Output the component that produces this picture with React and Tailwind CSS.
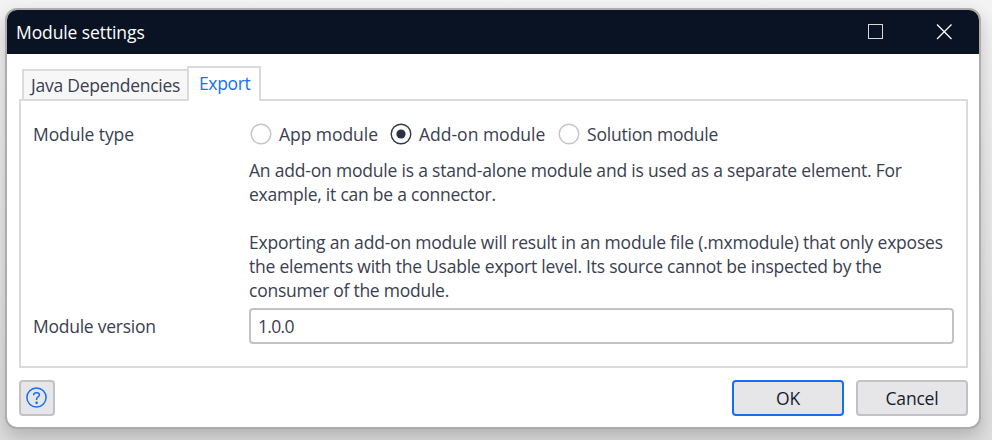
import React from 'react';

function Radio({ label, checked, className }) {
  return (
    <label className={`flex items-center whitespace-nowrap ${className}`}>
      <svg width="22" height="22" viewBox="0 0 22 22" fill="none" className="mr-[7px] shrink-0">
        <circle cx="11" cy="11" r="9.8" stroke={checked ? '#343a4c' : '#c5c4cb'} strokeWidth="1.4" />
        {checked && <circle cx="11" cy="11" r="4.6" fill="#2c3245" />}
      </svg>
      <span>{label}</span>
    </label>
  );
}

function Line({ children, className = '' }) {
  return <div className={`h-6 whitespace-nowrap ${className}`}>{children}</div>;
}

export default function App() {
  return (
    <div className="h-[440px] w-[992px] overflow-hidden bg-linear-to-b from-[#f3f3f3] to-[#dedede] pt-2 pl-[5px] font-['Open_Sans','Noto_Sans',sans-serif] text-[17.5px] leading-6 tracking-[-0.2px] text-[#3a4050]">
      <div className="flex h-[421px] w-[976px] flex-col overflow-hidden rounded-[12px] border-2 border-[#acacac] bg-white shadow-[0_8px_18px_rgba(0,0,0,0.2)]">
        <header className="flex h-11 shrink-0 items-center bg-[#091323] pl-[9px] text-white">
          <span className="grow tracking-[-0.1px]">Module settings</span>
          <svg width="16" height="16" viewBox="0 0 16 16" fill="none" stroke="#d8d8d8" className="mr-[53px]">
            <rect x="1.5" y="0.5" width="14" height="14" />
          </svg>
          <svg width="16" height="16" viewBox="0 0 16 16" fill="none" stroke="#ffffff" strokeWidth="1.3" className="mr-[27px]">
            <path d="M1 0.5L15.5 15M15.5 0.5L1 15" />
          </svg>
        </header>

        <main className="flex grow flex-col pt-3 pr-[11px] pl-3">
          <div className="relative z-10 -mb-0.5 flex h-[35px] items-end pl-[3px]">
            <div className="flex h-8 w-[165px] items-center border-2 border-r-0 border-[#dadbdc] bg-[#f7f7f7] pb-px pl-[7px] tracking-[-0.25px] whitespace-nowrap">Java Dependencies</div>
            <div className="flex h-[35px] w-[74px] items-center border-2 border-b-0 border-[#dadbdc] bg-white pb-[3px] pl-[10px] tracking-[-0.35px] text-[#146ff8]">Export</div>
          </div>

          <section className="h-[269px] shrink-0 border-2 border-[#dadbdc] pr-3 pl-3">
            <div className="flex pt-[21px]">
              <div className="w-[216px] shrink-0 tracking-[-0.1px]">Module type</div>
              <div>
                <div className="flex h-6 pl-px">
                  <Radio label="App module" className="w-[140px] tracking-[-0.05px]" />
                  <Radio label="Add-on module" checked className="w-[168px] tracking-normal" />
                  <Radio label="Solution module" className="" />
                </div>
                <div className="pt-3">
                  <Line>An add-on module is a stand-alone module and is used as a separate element. For</Line>
                  <Line className="tracking-[-0.23px]">example, it can be a connector.</Line>
                  <Line />
                  <Line>Exporting an add-on module will result in an module file (.mxmodule) that only exposes</Line>
                  <Line className="tracking-[-0.23px]">the elements with the Usable export level. Its source cannot be inspected by the</Line>
                  <Line className="tracking-[-0.25px]">consumer of the module.</Line>
                </div>
              </div>
            </div>
            <div className="flex items-center pt-1.5">
              <div className="w-[216px] shrink-0 tracking-[-0.25px]">Module version</div>
              <div className="flex h-9 grow items-center rounded-[4px] border-2 border-[#c3c2c9] pl-[7px] tracking-[-0.7px]">1.0.0</div>
            </div>
          </section>

          <footer className="flex items-center gap-3 pt-3 text-[#151d2d]">
            <button className="mr-auto flex size-9 items-center justify-center rounded-[4px] border-2 border-[#c2c1c8] bg-[#e6e6e9]" aria-label="Help">
              <svg width="22" height="22" viewBox="0 0 22 22" fill="none" stroke="#146ff8" strokeWidth="1.5">
                <circle cx="10.5" cy="10.5" r="9.6" />
                <path d="M7.7 8.3V7.6C7.7 6.4 9 5.7 10.6 5.7C12.2 5.7 13.4 6.5 13.4 7.9C13.4 9.8 10.6 10.2 10.6 12V13" />
                <circle cx="10.6" cy="15.8" r="0.6" />
              </svg>
            </button>
            <button className="h-9 w-28 rounded-[4px] border-2 border-[#146ff8] bg-[#e6e6e9]">OK</button>
            <button className="h-9 w-28 rounded-[4px] border-2 border-[#c2c1c8] bg-[#e6e6e9]">Cancel</button>
          </footer>
        </main>
      </div>
    </div>
  );
}
